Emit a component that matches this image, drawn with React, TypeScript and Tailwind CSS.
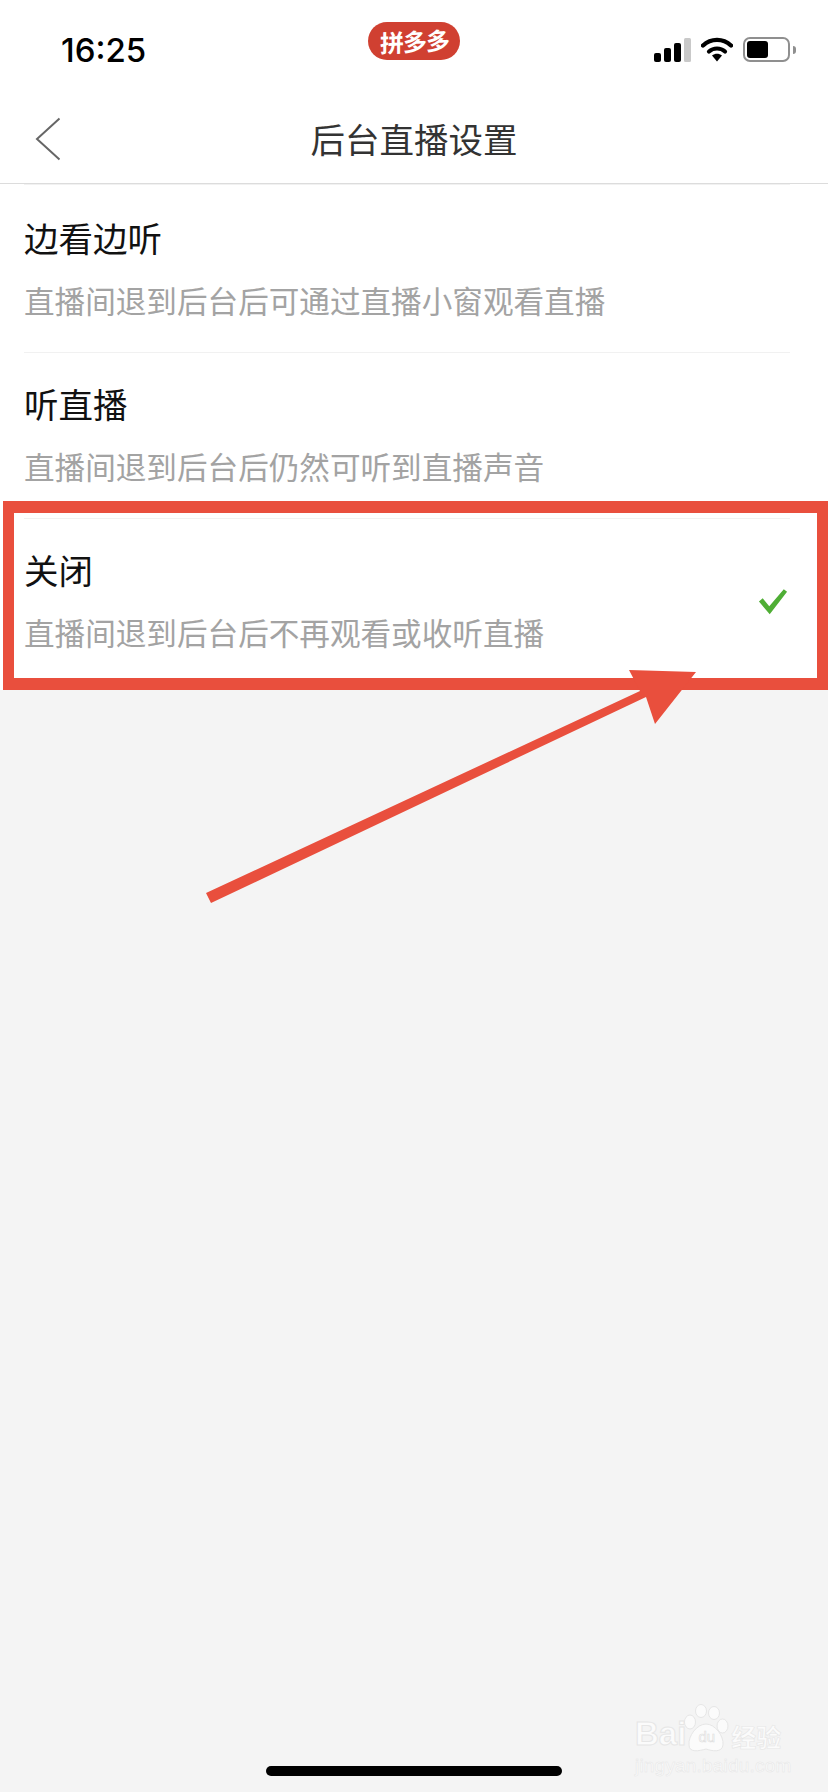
const CJK = "font-['Noto_Sans_CJK_SC','Liberation_Sans',sans-serif]";

const rows = [
  { title: "边看边听", desc: "直播间退到后台后可通过直播小窗观看直播", checked: false },
  { title: "听直播", desc: "直播间退到后台后仍然可听到直播声音", checked: false },
  { title: "关闭", desc: "直播间退到后台后不再观看或收听直播", checked: true },
];

function StatusIcons() {
  return (
    <div className="mt-[15px] flex items-center justify-self-end">
      <svg width="38" height="24" viewBox="0 0 38 24" aria-hidden>
        <rect x="0" y="15" width="7" height="9" rx="2" fill="#000" />
        <rect x="10" y="10" width="7" height="14" rx="2" fill="#000" />
        <rect x="20" y="5" width="7" height="19" rx="2" fill="#000" />
        <rect x="30" y="0" width="7" height="24" rx="1.5" fill="#c9c9c9" />
      </svg>
      <svg className="ml-[9px]" width="32" height="25" viewBox="0 0 32 25" aria-hidden>
        <path d="M2 8.5C10 1 22 1 30 8.5" fill="none" stroke="#000" strokeWidth="4.4" strokeLinecap="round" />
        <path d="M8 14.5C12.5 10.5 19.5 10.5 24 14.5" fill="none" stroke="#000" strokeWidth="4.2" strokeLinecap="round" />
        <path d="M11 18.6C14 16 18 16 21 18.6L16 24.5Z" fill="#000" />
      </svg>
      <div className="ml-[10px] h-[25px] w-[47px] rounded-[7px] border-2 border-[#8f8f8f] p-[2px]">
        <div className="h-full w-[21px] rounded-[3px] bg-black" />
      </div>
      <div className="ml-[3px] h-[8px] w-[3px] rounded-r-full bg-[#8f8f8f]" />
    </div>
  );
}

function Watermark() {
  return (
    <div className="absolute left-[635px] top-[1703px] flex w-[150px] flex-col font-['Liberation_Sans',sans-serif] text-[#fbfbfb]">
      <div className="flex h-[50px] items-end">
        <span className="text-[33px] font-bold leading-[38px] [-webkit-text-stroke:1px_#e6e6e6]">Bai</span>
        <div className="relative -ml-[2px] h-[49px] w-[45px] shrink-0">
          <svg width="45" height="49" viewBox="0 0 45 49" fill="#fbfbfb" stroke="#e6e6e6" strokeWidth="1" aria-hidden>
            <ellipse cx="6" cy="18" rx="5.5" ry="7" />
            <ellipse cx="17" cy="7" rx="5.5" ry="6.5" />
            <ellipse cx="30" cy="9" rx="5.5" ry="6.5" />
            <ellipse cx="38.5" cy="22" rx="5.5" ry="7" />
            <path d="M22 20C31 20 40 32 39 41C38 49 28 47 22 45C15 47 5 49 5 41C4 32 13 20 22 20Z" />
          </svg>
          <span className="absolute inset-x-0 bottom-[7px] text-center text-[15px] leading-[18px] [-webkit-text-stroke:0.6px_#dedede]">du</span>
        </div>
        <span className={`${CJK} ml-[2px] pb-[2px] text-[25px] font-bold leading-[30px] [-webkit-text-stroke:0.6px_#e6e6e6]`}>经验</span>
      </div>
      <span className="mt-[3px] text-[19px] leading-[20px] tracking-[0.2px] [-webkit-text-stroke:0.5px_#e6e6e6]">jingyan.baidu.com</span>
    </div>
  );
}

export default function App() {
  return (
    <div className={`${CJK} relative flex h-[1792px] w-[828px] flex-col overflow-hidden bg-[#f4f4f4]`}>
      <div className="bg-white">
        {/* status bar */}
        <div className="grid h-[92px] grid-cols-[1fr_auto_1fr] items-start px-[32px] pt-[22px]">
          <span className="ml-[29px] mt-[15px] font-['Inter',sans-serif] text-[33px] font-medium leading-[26px] text-black">16:25</span>
          <div className="flex h-[38px] w-[92px] items-center justify-center rounded-full bg-[#d04031]">
            <span className="-skew-y-3 text-[24px] font-bold leading-none tracking-[-1px] text-white">拼多多</span>
          </div>
          <StatusIcons />
        </div>
        {/* nav */}
        <div className="grid h-[92px] grid-cols-[1fr_auto_1fr] items-center border-b border-[#dcdcdc] pl-[35px]">
          <svg className="mt-[2px]" width="26" height="44" viewBox="0 0 26 44" aria-hidden>
            <path d="M24.5 1.5L2 22L24.5 42.5" fill="none" stroke="#666" strokeWidth="2" />
          </svg>
          <h1 className="-ml-[35px] text-[34.5px] font-normal leading-[44px] text-[#333]">后台直播设置</h1>
        </div>
        {/* options */}
        <div className="pb-[6px] pl-[24px] pr-[38px]">
          {rows.map((row) => (
            <div key={row.title} className="group flex h-[166px] items-center justify-between border-t border-[#f1f1f1] first:h-[168px]">
              <div className="self-start pt-[28px] group-first:pt-[30px]">
                <div className="text-[34.5px] leading-[44px] text-[#111]">{row.title}</div>
                <div className="mt-[20px] text-[30.6px] leading-[42px] text-[#a3a3a3]">{row.desc}</div>
              </div>
              {row.checked ? (
                <svg className="mr-[2px]" width="30" height="26" viewBox="0 0 32 27" aria-hidden>
                  <path d="M1 13L5 9.5L12 18L27.5 0L31 2.5L12.5 26.5Z" fill="#4fae35" />
                </svg>
              ) : null}
            </div>
          ))}
        </div>
      </div>
      <div className="flex flex-1 items-end justify-center pb-[16px]">
        <div className="h-[10px] w-[296px] rounded-full bg-black" />
      </div>
      {/* screenshot annotation */}
      <div className="absolute left-[3px] top-[501px] h-[189px] w-[825px] border-x-[11px] border-y-[12px] border-[#e94f3d]" />
      <svg className="absolute left-0 top-0" width="828" height="1792" viewBox="0 0 828 1792" aria-hidden>
        <path d="M206 893L640 691L629 670L696 672L655 724L646 697L211 903Z" fill="#e94f3d" />
      </svg>
      <Watermark />
    </div>
  );
}
